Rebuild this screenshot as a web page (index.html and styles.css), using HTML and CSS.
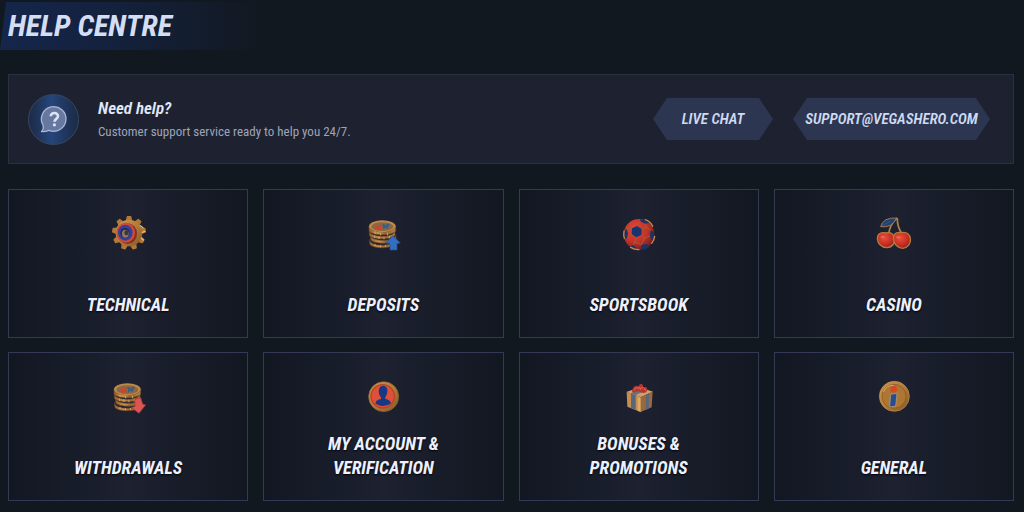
FILE: index.html
```
<!DOCTYPE html>
<html lang="en">
<head>
  <meta charset="UTF-8">
  <meta name="viewport" content="width=device-width, initial-scale=1">
  <title>Help Centre</title>
  <link rel="stylesheet" href="styles.css">
</head>
<body>
  <!-- Shared gradients and the coin stack -->
  <svg class="defs" width="0" height="0" aria-hidden="true">
    <defs>
      <linearGradient id="gold" x1="0" y1="0" x2="1" y2="1">
        <stop offset="0" stop-color="#cf9550"/>
        <stop offset="0.5" stop-color="#b57c38"/>
        <stop offset="1" stop-color="#855624"/>
      </linearGradient>
      <linearGradient id="coin" x1="0" y1="0" x2="1" y2="0">
        <stop offset="0" stop-color="#94612f"/>
        <stop offset="0.35" stop-color="#c9934d"/>
        <stop offset="0.6" stop-color="#966431"/>
        <stop offset="1" stop-color="#b98242"/>
      </linearGradient>
      <radialGradient id="red" cx="0.4" cy="0.35" r="0.7">
        <stop offset="0" stop-color="#e8503c"/>
        <stop offset="0.6" stop-color="#c92f22"/>
        <stop offset="1" stop-color="#8f211a"/>
      </radialGradient>
      <radialGradient id="ball" gradientUnits="userSpaceOnUse" cx="72" cy="72" r="66">
        <stop offset="0" stop-color="#e0483a"/>
        <stop offset="0.6" stop-color="#c13228"/>
        <stop offset="1" stop-color="#75201f"/>
      </radialGradient>
      <g id="coins">
        <path d="M45 104c0 22 74 22 74 0v13c-8 15-66 15-74 0z" fill="url(#coin)" stroke="#6b4525" stroke-width="2"/>
        <path d="M48 91c0 20 76 20 76 0v13c-8 14-68 14-76 0z" fill="url(#coin)" stroke="#6b4525" stroke-width="2"/>
        <path d="M44 78c0 21 77 21 77 0v13c-8 14-69 14-77 0z" fill="url(#coin)" stroke="#6b4525" stroke-width="2"/>
        <path d="M43 64c0 22 80 22 80 0v14c-8 15-72 15-80 0z" fill="url(#coin)" stroke="#6b4525" stroke-width="2"/>
        <ellipse cx="83" cy="64" rx="40" ry="18" fill="#bd8949"/>
        <ellipse cx="83" cy="65" rx="33" ry="13" fill="#8a6844"/>
        <path d="M61 66l7-7 4 7 6-9 3 14-13 5z" fill="#d3402f"/>
        <path d="M83 58l6-2 3 7 5-7 8 1-7 16-6-6-5 8z" fill="#365f8a"/>
        <path d="M60 91v8M73 94v8M88 95v8M104 92v8M61 117v7M77 120v7M92 120v6M61 79v8M78 83v8M98 83v8" stroke="#d2a464" stroke-width="3"/>
      </g>
    </defs>
  </svg>

  <header class="page-header">
    <h1>Help Centre</h1>
  </header>

  <main>
    <section class="support">
      <div class="support-icon">
        <svg viewBox="0 0 30 30" width="30" height="30" aria-hidden="true">
          <path d="M2.500 27.500c2-2 2.200-4 1.500-6.500A12.300 12.300 0 1 1 10 26.300c-2 .900-4.500 1.400-7.500 1.200z" fill="#66789f" stroke="#a9b7d3" stroke-width="1.300" stroke-linejoin="round"/>
          <path d="M11.800 12.300c0-4.600 7.400-4.200 7.200 0-.100 2.600-3.500 2.600-3.500 5.500" fill="none" stroke="#dbe4f6" stroke-width="2.600"/>
          <circle cx="15.400" cy="20.800" r="1.600" fill="#dbe4f6"/>
        </svg>
      </div>
      <div class="support-text">
        <h2>Need help?</h2>
        <p>Customer support service ready to help you 24/7.</p>
      </div>
      <div class="support-actions">
        <button type="button" class="btn btn-chat">Live chat</button>
        <a class="btn" href="mailto:support@vegashero.com">support@vegashero.com</a>
      </div>
    </section>

    <nav class="topics" aria-label="Help topics">
      <a class="topic" href="#technical">
        <svg class="topic-icon" viewBox="31 30 108 108" aria-hidden="true">
          <g fill="#b37836" stroke="#b37836" stroke-width="4" stroke-linejoin="round">
            <path id="tooth" d="M79 53l4-18h10l4 18z"/>
            <use href="#tooth" transform="rotate(40 88 84)"/>
            <use href="#tooth" transform="rotate(80 88 84)"/>
            <use href="#tooth" transform="rotate(120 88 84)"/>
            <use href="#tooth" transform="rotate(160 88 84)"/>
            <use href="#tooth" transform="rotate(200 88 84)"/>
            <use href="#tooth" transform="rotate(240 88 84)"/>
            <use href="#tooth" transform="rotate(280 88 84)"/>
            <use href="#tooth" transform="rotate(320 88 84)"/>
          </g>
          <circle cx="88" cy="84" r="40" fill="url(#gold)"/>
          <path d="M122 62l8 6M128 82l7-3M125 100l6 5" stroke="#e0bd7c" stroke-width="4" stroke-linecap="round"/>
          <ellipse cx="83" cy="86" rx="29" ry="31" fill="#7c3324"/>
          <ellipse cx="78" cy="83" rx="28" ry="30" fill="#d04a36"/>
          <ellipse cx="77" cy="83" rx="22" ry="24" fill="#36419c"/>
          <ellipse cx="76" cy="84" rx="14" ry="16" fill="#24285f"/>
          <ellipse cx="77" cy="86" rx="10" ry="12" fill="#8f7a60"/>
          <ellipse cx="80" cy="83" rx="6" ry="8" fill="#443536"/>
        </svg>
        <span class="topic-name">Technical</span>
      </a>
      <a class="topic" href="#deposits">
        <svg class="topic-icon" viewBox="31 30 108 108" aria-hidden="true">
          <use href="#coins"/>
          <path d="M115 92l22 22-10 2v19h-21v-19l-12-2z" fill="#326fc0" stroke="#234f8e" stroke-width="2"/>
        </svg>
        <span class="topic-name">Deposits</span>
      </a>
      <a class="topic" href="#sportsbook">
        <svg class="topic-icon" viewBox="31 30 108 108" aria-hidden="true">
          <circle cx="85" cy="88" r="46" fill="url(#ball)"/>
          <path d="M64 70l15-7 14 9-1 18-16 7-13-10z" fill="#17366f"/>
          <path d="M88 43l16 2 11 9-12 2-14-7z" fill="#1b3468"/>
          <path d="M40 80l7-9 5 14-3 15-9 3z" fill="#1b3468"/>
          <path d="M92 119l16-2 8 8-10 7-14 2z" fill="#1b3468"/>
          <path d="M120 76l10 5 1 19-9 6-4-13z" fill="#1b3468"/>
          <path d="M59 124l8-4 10 8-2 5z" fill="#1b3468"/>
          <path d="M79 63l10-14M93 72l15-5 12 9M108 67l-5-11M92 90l10 9 16-6M102 99l-10 20M76 97l-3 14 19 8M63 87l-14 13M73 111l-6 9M64 70l-17 1" fill="none" stroke="#a85a35" stroke-width="3"/>
          <path d="M104 44q16 6 22 20M132 94q-1 12-9 21M60 127q12 8 25 7M40 78q-2 12 1 22" fill="none" stroke="#c58a4c" stroke-width="4" stroke-linecap="round"/>
        </svg>
        <span class="topic-name">Sportsbook</span>
      </a>
      <a class="topic" href="#casino">
        <svg class="topic-icon" viewBox="35 30 108 108" aria-hidden="true">
          <path d="M98 39Q77 57 73 87M99 39q-1 27 15 49" fill="none" stroke="#b18048" stroke-width="5"/>
          <path d="M49 65q7-28 48-26-14 31-48 26z" fill="#213f70" stroke="#9f7b4c" stroke-width="3"/>
          <path d="M53 63l26-15" stroke="#416187" stroke-width="2"/>
          <path d="M65 84c-39-10-31 45 3 44 35-3 27-54-3-44z" fill="url(#red)" stroke="#b67a3c" stroke-width="4"/>
          <path d="M112 83c-37-9-30 46 3 47 35-4 28-55-3-47z" fill="url(#red)" stroke="#b67a3c" stroke-width="4"/>
          <ellipse cx="55" cy="96" rx="6" ry="4" fill="#e86450"/>
          <ellipse cx="102" cy="97" rx="6" ry="4" fill="#e86450"/>
        </svg>
        <span class="topic-name">Casino</span>
      </a>
      <a class="topic" href="#withdrawals">
        <svg class="topic-icon" viewBox="31 30 108 108" aria-hidden="true">
          <use href="#coins"/>
          <path d="M105 94l18-5 6 19 9 3-20 25-23-17 11-4z" fill="#dc5651" stroke="#97372f" stroke-width="2"/>
        </svg>
        <span class="topic-name">Withdrawals</span>
      </a>
      <a class="topic" href="#account">
        <svg class="topic-icon" viewBox="31 30 108 108" aria-hidden="true">
          <circle cx="87" cy="86" r="45" fill="url(#gold)" stroke="#8b6130" stroke-width="2"/>
          <circle cx="84" cy="85" r="37" fill="#b9412c"/>
          <circle cx="84" cy="85" r="33" fill="#df5038"/>
          <path d="M72 69q1-16 15-16 13 2 11 19-2 11-6 15v6q15 2 17 13-9 8-24 8-16-1-23-8 3-12 17-13v-5q-7-7-7-19z" fill="#173884"/>
        </svg>
        <span class="topic-name">My account &amp;<br>verification</span>
      </a>
      <a class="topic" href="#bonuses">
        <svg class="topic-icon" viewBox="31 30 108 108" aria-hidden="true">
          <path d="M47 72l40-14 40 13-37 17z" fill="#d1a065"/>
          <path d="M48 72l42 15v45l-40-16z" fill="#c48d4d"/>
          <path d="M90 87l36-16-3 47-33 14z" fill="#9b683a"/>
          <path d="M61 77l14 5v44l-14-6zM106 80l10-5-2 47-9 4z" fill="#58677e"/>
          <path d="M60 76l38-15 12 4-36 17z" fill="#67718a"/>
          <path d="M81 87l9 3v42l-9-4z" fill="#dbac66"/>
          <path d="M82 70q-25 11-15-9 5-13 19-4-2-10 5-9 8 1 6 11 13-7 13 8-4 14-28 3z" fill="#b8342f"/>
          <path d="M71 67q3-12 13-5M88 63q11-11 17 5M84 55l6 10" fill="none" stroke="#dd705c" stroke-width="3"/>
        </svg>
        <span class="topic-name">Bonuses &amp;<br>promotions</span>
      </a>
      <a class="topic" href="#general">
        <svg class="topic-icon" viewBox="35 30 108 108" aria-hidden="true">
          <circle cx="90" cy="85" r="45" fill="url(#gold)" stroke="#c09350" stroke-width="2"/>
          <circle cx="89" cy="85" r="36" fill="#ad7733" stroke="#7d5425" stroke-width="2"/>
          <path d="M57 72q9-21 31-20" fill="none" stroke="#d5ab66" stroke-width="3"/>
          <circle cx="88" cy="64" r="10" fill="#d94826"/>
          <path d="M79 79l19-3-4 38-18 3z" fill="#254d91" stroke="#c0a477" stroke-width="2"/>
        </svg>
        <span class="topic-name">General</span>
      </a>
    </nav>
  </main>
</body>
</html>
```
FILE: styles.css
```
* {
  box-sizing: border-box;
}
body {
  margin: 0;
  min-height: 100vh;
  background: #121820;
  color: #e8ecfa;
  font-family: "Roboto Condensed", "Liberation Sans Narrow", "Liberation Sans", sans-serif;
}
h1, h2, p {
  margin: 0;
}
.defs {
  display: block;
}

.page-header {
  width: 264px;
  margin-top: 2px;
  padding: 0 8px;
  background: linear-gradient(90deg, #14264b 0%, #14213c 45%, #121820 100%);
  clip-path: polygon(6px 0, 100% 0, 100% 100%, 0 100%);
}
h1 {
  font-size: 30px;
  line-height: 48px;
  font-style: italic;
  font-weight: bold;
  text-transform: uppercase;
  white-space: nowrap;
  color: #d3def5;
}

main {
  padding: 24px 10px 10px 8px;
}

/* Contact bar */
.support {
  display: flex;
  align-items: center;
  min-height: 90px;
  padding: 16px 23px 16px 19px;
  background: #1e2230;
  border: 1px solid #2c303e;
}
.support-icon {
  display: flex;
  align-items: center;
  justify-content: center;
  width: 51px;
  height: 51px;
  margin-right: 19px;
  border: 1px solid #354764;
  border-radius: 50%;
  background: linear-gradient(90deg, #1c2a46, #254579 45%, #1c2a46);
}
.support-text {
  padding-top: 2px;
}
.support-text h2 {
  font-size: 17px;
  line-height: 24px;
  font-style: italic;
  font-weight: 600;
  color: #e2e8f8;
}
.support-text p {
  font-size: 13px;
  line-height: 24px;
  color: #9ea4ba;
}
.support-actions {
  display: flex;
  gap: 20px;
  margin-left: auto;
}
.btn {
  display: flex;
  align-items: center;
  justify-content: center;
  width: 197px;
  height: 42px;
  padding: 0;
  border: 0;
  background: #2d3650;
  clip-path: polygon(14px 0, calc(100% - 14px) 0, 100% 50%, calc(100% - 14px) 100%, 14px 100%, 0 50%);
  color: #cfdaf3;
  font-family: inherit;
  font-size: 15px;
  font-style: italic;
  font-weight: 600;
  text-decoration: none;
  text-transform: uppercase;
  cursor: pointer;
}
.btn-chat {
  width: 120px;
}
.btn:hover {
  background: #38446a;
}

/* Topic cards */
.topics {
  display: grid;
  grid-template-columns: repeat(4, 1fr);
  gap: 14px 15px;
  margin-top: 25px;
}
.topic {
  display: flex;
  flex-direction: column;
  align-items: center;
  justify-content: space-between;
  min-height: 149px;
  padding: 25px 12px 20px;
  border: 1px solid #343a55;
  background: linear-gradient(90deg, #121722 0%, #1d2130 50%, #121721 100%);
  color: #edf0ff;
  text-decoration: none;
}
.topic:hover {
  border-color: #4a5684;
}
.topic-icon {
  width: 36px;
  height: 36px;
}
.topic-name {
  font-size: 18px;
  line-height: 24px;
  font-style: italic;
  font-weight: bold;
  text-align: center;
  text-transform: uppercase;
  text-shadow: 0 1px 2px #000;
}

@media (max-width: 760px) {
  .support {
    flex-wrap: wrap;
    gap: 12px 0;
  }
  .support-actions {
    flex-wrap: wrap;
    margin-left: 0;
  }
  .topics {
    grid-template-columns: repeat(2, 1fr);
  }
}
```
